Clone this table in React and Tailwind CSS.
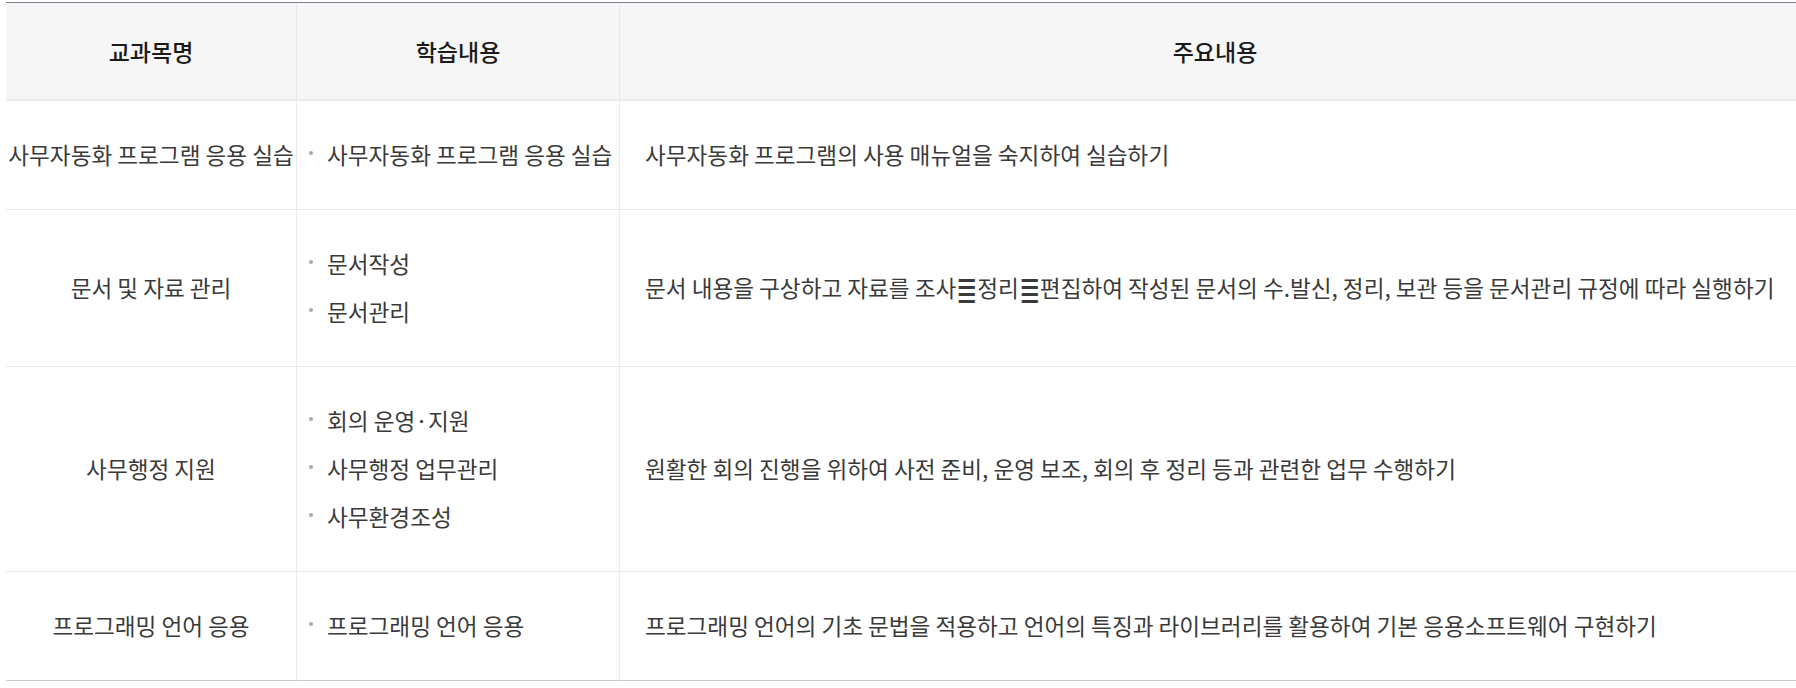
import React from "react";

const Sep = () => (
  <span className="inline-block scale-y-[1.7] scale-x-[1.15] mx-[1px]">≣</span>
);

const rows = [
  {
    name: "사무자동화 프로그램 응용 실습",
    items: ["사무자동화 프로그램 응용 실습"],
    desc: "사무자동화 프로그램의 사용 매뉴얼을 숙지하여 실습하기",
  },
  {
    name: "문서 및 자료 관리",
    items: ["문서작성", "문서관리"],
    desc: (
      <>
        문서 내용을 구상하고 자료를 조사<Sep />정리<Sep />편집하여 작성된 문서의 수.발신, 정리, 보관 등을 문서관리 규정에 따라 실행하기
      </>
    ),
  },
  {
    name: "사무행정 지원",
    items: ["회의 운영·지원", "사무행정 업무관리", "사무환경조성"],
    desc: "원활한 회의 진행을 위하여 사전 준비, 운영 보조, 회의 후 정리 등과 관련한 업무 수행하기",
  },
  {
    name: "프로그래밍 언어 응용",
    items: ["프로그래밍 언어 응용"],
    desc: "프로그래밍 언어의 기초 문법을 적용하고 언어의 특징과 라이브러리를 활용하여 기본 응용소프트웨어 구현하기",
  },
];

export default function App() {
  return (
    <div
      className="w-[1796px] h-[688px] overflow-hidden bg-white pt-[2px] pl-[6px]"
      style={{ fontFamily: '"Noto Sans CJK KR", "Noto Sans", sans-serif' }}
    >
      <table className="w-[1804px] table-fixed border-separate border-spacing-0 border-t border-t-[#7b8191] text-[22.6px] leading-[30px] text-[#3a3a3a]">
        <colgroup>
          <col className="w-[291px]" />
          <col className="w-[323px]" />
          <col className="w-[1190px]" />
        </colgroup>
        <thead>
          <tr>
            <th className="bg-[#f6f6f6] py-[33px] text-[23px] font-medium text-[#1a1a1a] border-b-2 border-b-[#e9edf0] border-r border-r-[#e8e8e8]">
              교과목명
            </th>
            <th className="bg-[#f6f6f6] py-[33px] text-[23px] font-medium text-[#1a1a1a] border-b-2 border-b-[#e9edf0] border-r border-r-[#e8e8e8]">
              학습내용
            </th>
            <th className="bg-[#f6f6f6] py-[33px] text-[23px] font-medium text-[#1a1a1a] border-b-2 border-b-[#e9edf0]">
              주요내용
            </th>
          </tr>
        </thead>
        <tbody>
          {rows.map((r, i) => {
            const last = i === rows.length - 1;
            const b = last ? "border-b border-b-[#c8cbd0]" : "border-b border-b-[#e8e8e8]";
            return (
              <tr key={i}>
                <td className={`py-[39px] px-0 text-center whitespace-nowrap border-r border-r-[#ebebeb] ${b}`}>
                  {r.name}
                </td>
                <td className={`py-[39px] pl-[12px] pr-0 whitespace-nowrap border-r border-r-[#ebebeb] ${b}`}>
                  <ul className="flex flex-col gap-[18px]">
                    {r.items.map((it) => (
                      <li key={it} className="flex items-start">
                        <span className="mt-[11px] mr-[14px] w-[4px] h-[4px] rounded-full bg-[#a9a9a9] shrink-0" />
                        <span>{it}</span>
                      </li>
                    ))}
                  </ul>
                </td>
                <td className={`py-[39px] pl-[25px] pr-0 whitespace-nowrap ${b}`}>{r.desc}</td>
              </tr>
            );
          })}
        </tbody>
      </table>
    </div>
  );
}
